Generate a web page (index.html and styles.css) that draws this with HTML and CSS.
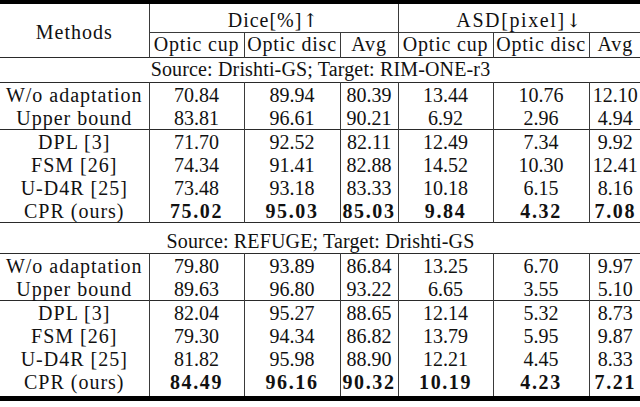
FILE: index.html
```html
<!DOCTYPE html>
<html>
<head>
<meta charset="utf-8">
<link rel="stylesheet" href="styles.css">
</head>
<body>
<table class="tbl">
  <colgroup>
    <col class="c-m"><col class="c-cup"><col class="c-disc"><col class="c-avg"><col class="c-cup"><col class="c-disc"><col class="c-avg2">
  </colgroup>
  <tr class="h1">
    <td rowspan="2" class="lbl">Methods</td>
    <td colspan="3" class="vl hd">Dice[%]<span class="arr">↑</span></td>
    <td colspan="3" class="vl hd hd2">ASD[pixel]<span class="arr">↓</span></td>
  </tr>
  <tr class="h2">
    <td class="vl sub">Optic cup</td><td class="vl sub">Optic disc</td><td class="vl sub">Avg</td>
    <td class="vl sub">Optic cup</td><td class="vl sub">Optic disc</td><td class="vl sub">Avg</td>
  </tr>
  <tr class="src src1"><td colspan="7">Source: Drishti-GS; Target: RIM-ONE-r3</td></tr>
  <tr class="r"><td class="lbl">W/o adaptation</td><td class="vl">70.84</td><td class="vl">89.94</td><td class="vl">80.39</td><td class="vl">13.44</td><td class="vl">10.76</td><td class="vl">12.10</td></tr>
  <tr class="r"><td class="lbl">Upper bound</td><td class="vl">83.81</td><td class="vl">96.61</td><td class="vl">90.21</td><td class="vl">6.92</td><td class="vl">2.96</td><td class="vl">4.94</td></tr>
  <tr class="r sep"><td class="lbl">DPL [3]</td><td class="vl">71.70</td><td class="vl">92.52</td><td class="vl">82.11</td><td class="vl">12.49</td><td class="vl">7.34</td><td class="vl">9.92</td></tr>
  <tr class="r"><td class="lbl">FSM [26]</td><td class="vl">74.34</td><td class="vl">91.41</td><td class="vl">82.88</td><td class="vl">14.52</td><td class="vl">10.30</td><td class="vl">12.41</td></tr>
  <tr class="r"><td class="lbl">U-D4R [25]</td><td class="vl">73.48</td><td class="vl">93.18</td><td class="vl">83.33</td><td class="vl">10.18</td><td class="vl">6.15</td><td class="vl">8.16</td></tr>
  <tr class="r"><td class="lbl">CPR (ours)</td><td class="vl b">75.02</td><td class="vl b">95.03</td><td class="vl b">85.03</td><td class="vl b">9.84</td><td class="vl b">4.32</td><td class="vl b">7.08</td></tr>
  <tr class="src src2"><td colspan="7">Source: REFUGE; Target: Drishti-GS</td></tr>
  <tr class="r"><td class="lbl">W/o adaptation</td><td class="vl">79.80</td><td class="vl">93.89</td><td class="vl">86.84</td><td class="vl">13.25</td><td class="vl">6.70</td><td class="vl">9.97</td></tr>
  <tr class="r"><td class="lbl">Upper bound</td><td class="vl">89.63</td><td class="vl">96.80</td><td class="vl">93.22</td><td class="vl">6.65</td><td class="vl">3.55</td><td class="vl">5.10</td></tr>
  <tr class="r sep"><td class="lbl">DPL [3]</td><td class="vl">82.04</td><td class="vl">95.27</td><td class="vl">88.65</td><td class="vl">12.14</td><td class="vl">5.32</td><td class="vl">8.73</td></tr>
  <tr class="r"><td class="lbl">FSM [26]</td><td class="vl">79.30</td><td class="vl">94.34</td><td class="vl">86.82</td><td class="vl">13.79</td><td class="vl">5.95</td><td class="vl">9.87</td></tr>
  <tr class="r"><td class="lbl">U-D4R [25]</td><td class="vl">81.82</td><td class="vl">95.98</td><td class="vl">88.90</td><td class="vl">12.21</td><td class="vl">4.45</td><td class="vl">8.33</td></tr>
  <tr class="r last"><td class="lbl">CPR (ours)</td><td class="vl b">84.49</td><td class="vl b">96.16</td><td class="vl b">90.32</td><td class="vl b">10.19</td><td class="vl b">4.23</td><td class="vl b">7.21</td></tr>
</table>
</body>
</html>
```
FILE: styles.css
```css
body {
  margin: 0;
  background: #ffffff;
}
.tbl {
  border-collapse: collapse;
  table-layout: fixed;
  width: 640px;
  color: #111111;
  border-top: 4px solid #000000;
}
.c-m { width: 149px; }
.c-cup { width: 95px; }
.c-disc { width: 96px; }
.c-avg { width: 58px; }
.c-avg2 { width: 52px; }
.tbl td {
  font-family: "Liberation Serif", "DejaVu Serif", serif;
  font-size: 20px;
  padding: 0;
  text-align: center;
  line-height: 20px;
  white-space: nowrap;
}
.arr {
  font-family: "DejaVu Serif", serif;
  font-size: 19px;
  color: #111111;
}
.lbl {
  letter-spacing: 1px;
}
.hd {
  letter-spacing: 1px;
}
.hd2 {
  letter-spacing: 1.6px;
}
.sub {
  letter-spacing: 0.8px;
}
.src td {
  letter-spacing: 0.15px;
}
.vl {
  border-left: 1px solid #3a3a3a;
}
.h1 td { height: 25px; padding-top: 3px; }
.h1 td.vl { border-bottom: 1px solid #3a3a3a; }
.h2 td { height: 21px; padding-bottom: 3px; }
.h2 { border-bottom: 1px solid #2a2a2a; }
.src1 td { height: 22px; padding-bottom: 2px; }
.src { border-bottom: 1px solid #2a2a2a; }
.src2 { border-top: 1px solid #2a2a2a; }
.src2 td { height: 24px; padding-top: 6px; }
.r td { height: 22px; padding-top: 1px; }
.sep { border-top: 1px solid #2a2a2a; }
.last td { padding-bottom: 3px; }
.last { border-bottom: 5px solid #000000; }
.b {
  font-weight: bold;
  letter-spacing: 1.6px;
}
```
